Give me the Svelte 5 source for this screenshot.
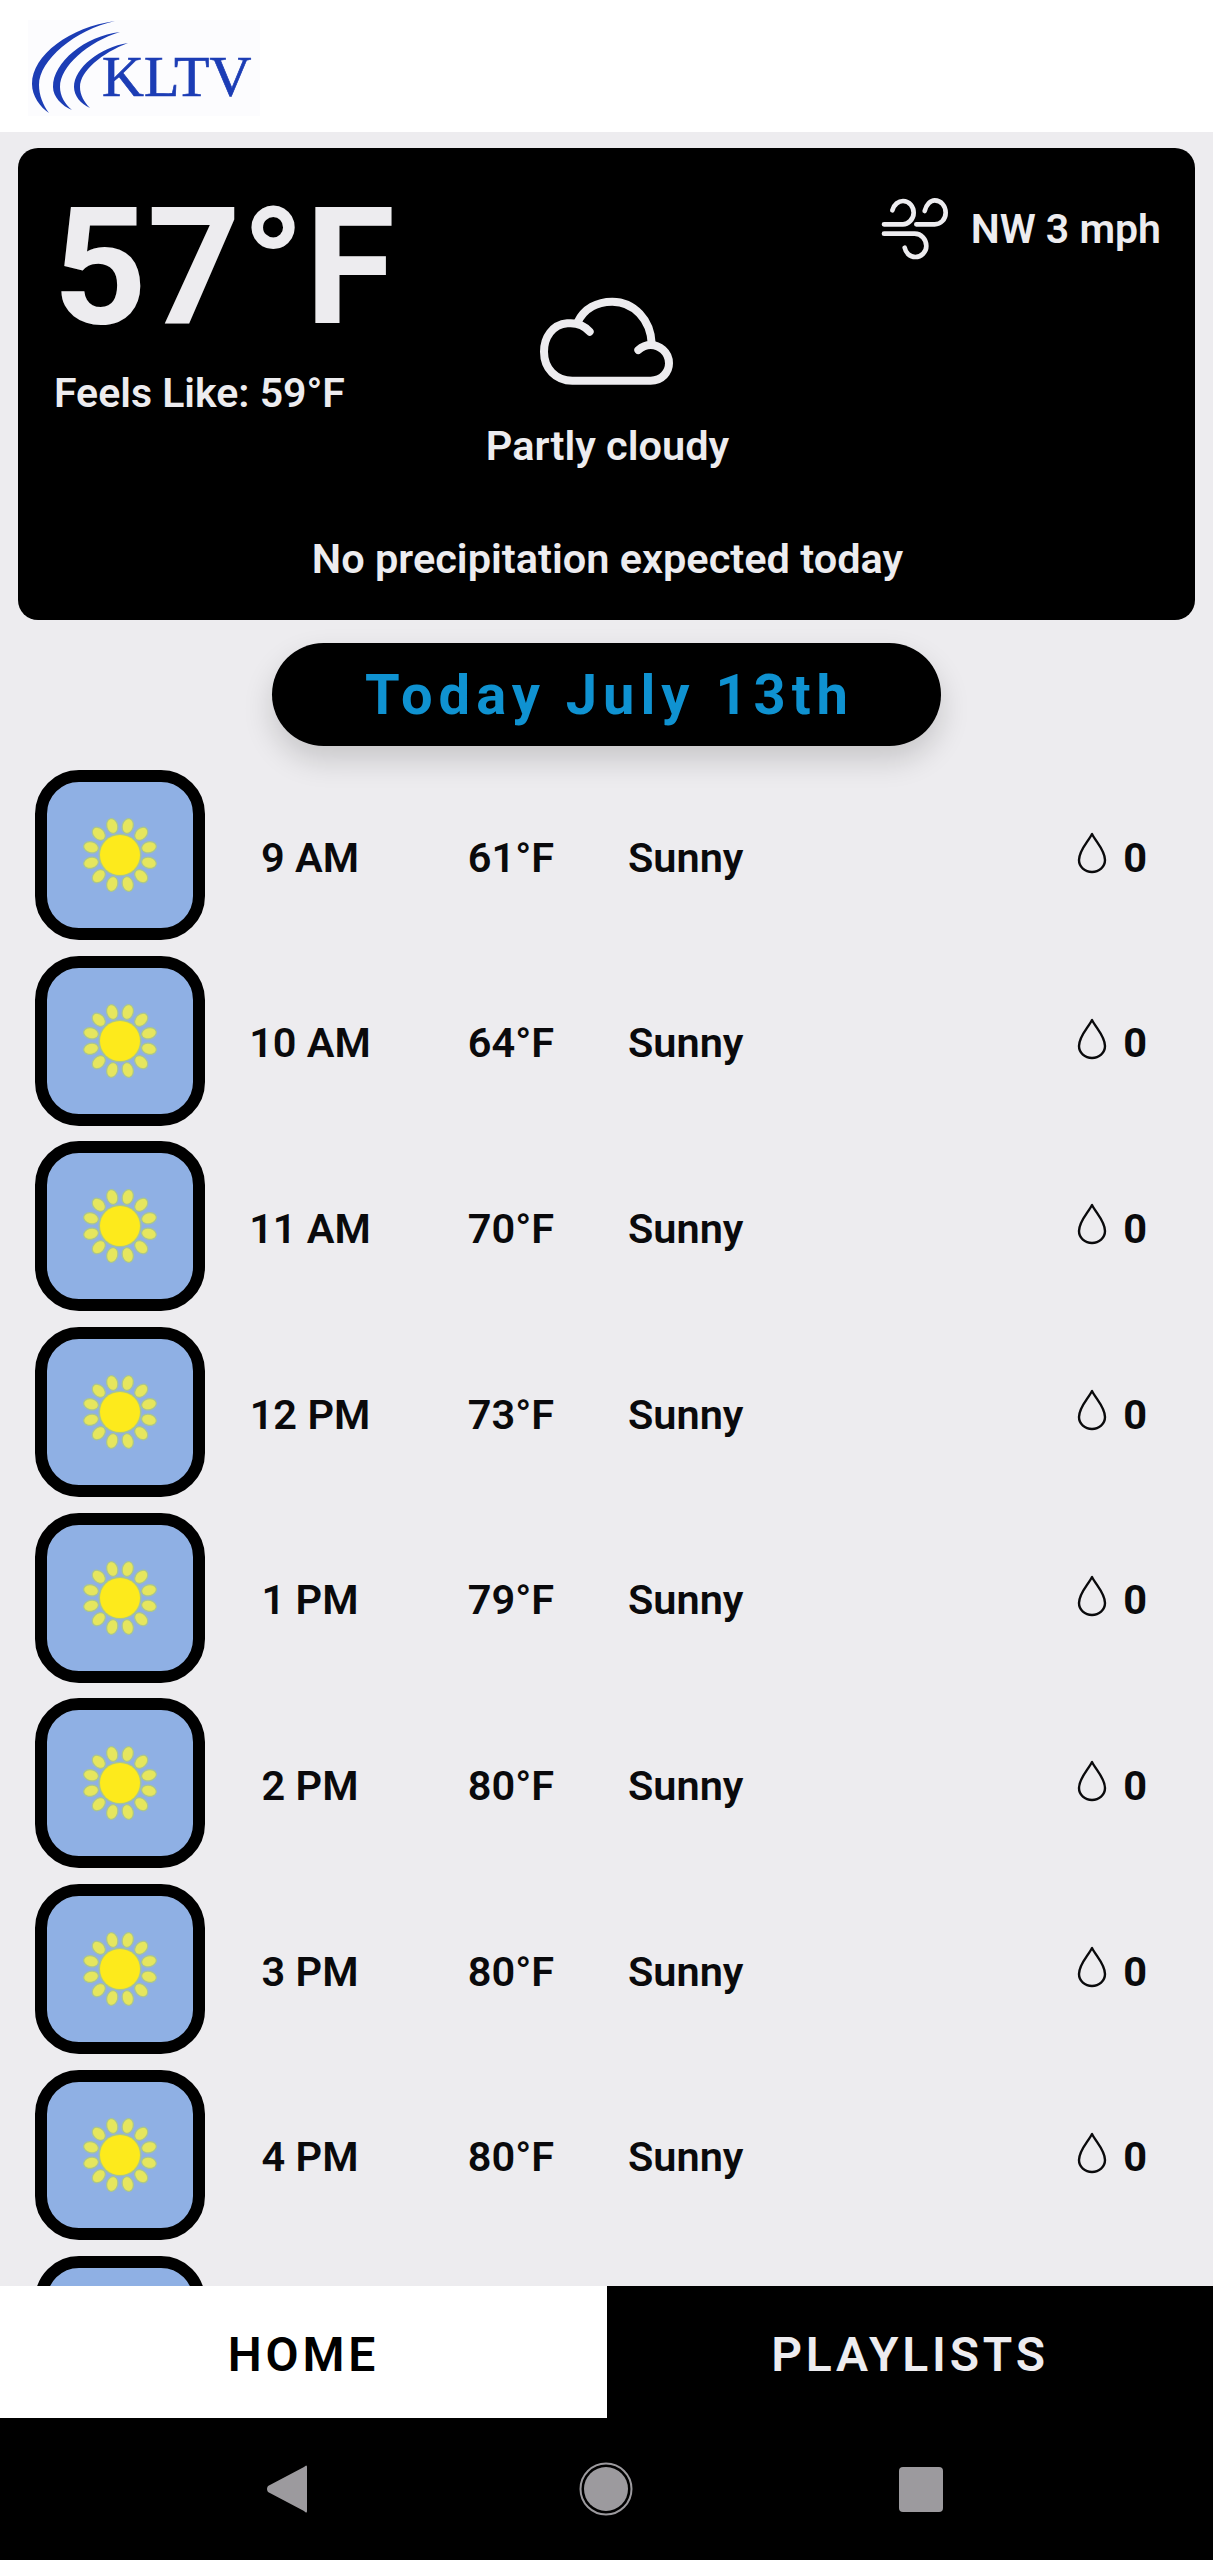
<script>
  const hours = [
    { time: '9 AM', temp: 61 },
    { time: '10 AM', temp: 64 },
    { time: '11 AM', temp: 70 },
    { time: '12 PM', temp: 73 },
    { time: '1 PM', temp: 79 },
    { time: '2 PM', temp: 80 },
    { time: '3 PM', temp: 80 },
    { time: '4 PM', temp: 80 }
  ];
  const rays = [15, 45, 75, 105, 135, 165, 195, 225, 255, 285, 315, 345];
</script>

<div class="page">
  <header>
    <svg class="logo" viewBox="0 0 270 132" width="270" height="132" role="img" aria-label="KLTV logo">
      <rect x="28" y="20" width="232" height="96" fill="#fcfcfe" />
      <g fill="#1c3db5">
        <path d="M115 21 C70 27 32 55 32 84 C32 96 40 107 49 113 C43 105 39 95 39 85 C39 60 75 30 115 21 Z" />
        <path d="M120 32 C85 36 53 62 53 87 C53 97 62 106 72 110 C65 104 60 96 60 87 C60 66 88 42 120 32 Z" />
        <path d="M128 43 C100 47 74 68 74 87 C74 96 81 104 90 108 C84 102 80 95 80 87 C80 71 102 53 128 43 Z" />
      </g>
      <text x="102" y="96" fill="#1c3db5" stroke="#1c3db5" stroke-width="0.7" class="logo-text">KLTV</text>
    </svg>
  </header>

  <section class="card">
    <div class="now">
      <div class="temp">57°F</div>
      <div class="feels">Feels Like: 59°F</div>
    </div>
    <div class="sky">
      <svg viewBox="0 0 540 360" width="180" height="120" fill="none" stroke="#edecef" stroke-width="24" stroke-linecap="round" stroke-linejoin="round">
        <path d="M242 155 C222 132 195 128 175 130 C130 134 105 172 105 215 C105 265 140 302 190 302 H425 C460 302 480 275 480 250 C480 215 450 195 425 195 C410 195 396 203 388 210" />
        <path d="M205 128 C225 85 265 65 310 65 C375 65 425 120 428 190" />
      </svg>
      <div class="sky-label">Partly cloudy</div>
    </div>
    <div class="wind">
      <svg viewBox="60 45 225 195" width="75" height="65" fill="none" stroke="#edecef" stroke-width="14" stroke-linecap="round">
        <path d="M103 88 C108 70 122 60 135 60 C155 60 167 78 167 95 C167 115 150 130 135 130 H78" />
        <path d="M200 90 C205 70 218 58 230 58 C250 58 263 76 263 95 C263 115 248 130 230 130 H175" />
        <path d="M78 158 H170 C190 158 205 175 205 195 C205 213 190 228 172 228 C155 228 143 215 140 200" />
      </svg>
      <span>NW 3 mph</span>
    </div>
    <div class="precip">No precipitation expected today</div>
  </section>

  <div class="pill-wrap">
    <div class="pill">Today July 13th</div>
  </div>

  <main class="list">
    {#each hours as h}
      <div class="row">
        <div class="thumb">
          <svg viewBox="-50 -50 100 100" width="100" height="100">
            {#each rays as a}
              <ellipse cx="0" cy="-30" rx="5.5" ry="7.5" fill="#e6e65e" stroke="#a9c58e" stroke-width="1.2" transform="rotate({a})" />
            {/each}
            <circle r="21.5" fill="#a9c58e" />
            <circle r="20" fill="#fdea1c" />
          </svg>
        </div>
        <div class="time">{h.time}</div>
        <div class="deg">{h.temp}°F</div>
        <div class="desc">Sunny</div>
        <div class="rain">
          <svg viewBox="0 0 30 42" width="30" height="42" fill="none" stroke="#0a0a0c" stroke-width="2.4" stroke-linejoin="round">
            <path d="M15 2 C11 10 2 18 2 28 C2 35 8 40 15 40 C22 40 28 35 28 28 C28 18 19 10 15 2 Z" />
          </svg>
          <span>0</span>
        </div>
      </div>
    {/each}
    <div class="row"><div class="thumb"></div></div>
  </main>

  <nav class="tabs">
    <div class="tab on">HOME</div>
    <div class="tab">PLAYLISTS</div>
  </nav>

  <div class="sysbar">
    <svg viewBox="0 0 42 48" width="42" height="48"><path d="M41 2 V46 Q41 49 38 46 L2 27 Q0 24 2 21 L38 2 Q41 -1 41 2 Z" fill="#9c9a9e" /></svg>
    <svg viewBox="0 0 54 54" width="54" height="54">
      <circle cx="27" cy="27" r="25.5" fill="none" stroke="#9c9a9e" stroke-width="2" />
      <circle cx="27" cy="27" r="22" fill="#9c9a9e" />
    </svg>
    <div class="square"></div>
  </div>
</div>

<style>
  :global(body) {
    margin: 0;
    background: #edecef;
  }
  .page {
    width: 1213px;
    height: 2560px;
    display: flex;
    flex-direction: column;
    overflow: hidden;
    background: #edecef;
    font-family: Roboto, "Noto Sans", sans-serif;
    color: #0a0a0c;
  }
  header {
    height: 132px;
    flex: none;
    background: #fff;
  }
  .logo {
    display: block;
  }
  .logo-text {
    font-family: "Liberation Serif", serif;
    font-size: 58px;
  }
  .card {
    flex: none;
    box-sizing: border-box;
    height: 472px;
    margin: 16px 18px 0;
    padding: 42px 34px 37px 36px;
    background: #000;
    border-radius: 20px;
    color: #edecef;
    display: grid;
    grid-template-columns: 1fr auto 1fr;
    grid-template-rows: 1fr auto;
    font-size: 41.5px;
    font-weight: 600;
  }
  .temp {
    font-size: 164px;
    font-weight: 700;
    line-height: 150px;
    margin-top: 2px;
    margin-left: -1px;
  }
  .feels {
    margin-top: 27px;
    font-size: 41px;
  }
  .sky {
    display: flex;
    flex-direction: column;
    align-items: center;
    padding-top: 90px;
  }
  .sky svg {
    margin-left: -16px;
  }
  .sky-label {
    margin-top: 21px;
  }
  .wind {
    justify-self: end;
    display: flex;
    align-items: center;
    gap: 18px;
    height: 65px;
    margin-top: 6px;
    font-size: 41px;
  }
  .precip {
    grid-column: 1 / -1;
    text-align: center;
  }
  .pill-wrap {
    flex: none;
    display: flex;
    justify-content: center;
    padding: 23px 0 24px;
  }
  .pill {
    box-sizing: border-box;
    width: 669px;
    height: 103px;
    padding-left: 6px;
    display: flex;
    align-items: center;
    justify-content: center;
    background: #000;
    border-radius: 52px;
    color: #0f92d1;
    font-size: 56px;
    font-weight: 700;
    letter-spacing: 6px;
    box-shadow: 0 14px 30px rgba(0, 0, 0, 0.16);
  }
  .list {
    flex: 1;
    min-height: 0;
    overflow: hidden;
    display: flex;
    flex-direction: column;
    gap: 15.7px;
  }
  .row {
    flex: none;
    display: grid;
    grid-template-columns: 175px 200px 202px 1fr auto;
    align-items: center;
    height: 170px;
    padding: 0 66px 0 35px;
    font-size: 41.5px;
    font-weight: 600;
  }
  .thumb {
    box-sizing: border-box;
    width: 170px;
    height: 170px;
    border: 12px solid #000;
    border-radius: 44px;
    background: #8fb0e4;
    display: flex;
    align-items: center;
    justify-content: center;
  }
  .time,
  .deg,
  .desc {
    padding-top: 4px;
  }
  .time,
  .deg {
    text-align: center;
  }
  .desc {
    padding-left: 16px;
  }
  .rain {
    display: flex;
    align-items: center;
    gap: 16px;
  }
  .rain svg {
    margin-top: -4px;
  }
  .rain span {
    padding-top: 4px;
    font-weight: 700;
  }
  .tabs {
    flex: none;
    height: 132px;
    display: grid;
    grid-template-columns: 607px 1fr;
    background: #000;
    color: #edecef;
    font-size: 48px;
    font-weight: 600;
    letter-spacing: 3.8px;
  }
  .tab {
    display: flex;
    align-items: center;
    justify-content: center;
    padding-top: 4px;
  }
  .on {
    background: #fff;
    color: #000;
  }
  .sysbar {
    flex: none;
    height: 142px;
    background: #000;
    display: flex;
    align-items: center;
    justify-content: center;
    gap: 271px;
  }
  .square {
    width: 44px;
    height: 45px;
    border-radius: 4px;
    background: #9c9a9e;
    margin-left: -5px;
    margin-right: 5px;
  }
</style>
